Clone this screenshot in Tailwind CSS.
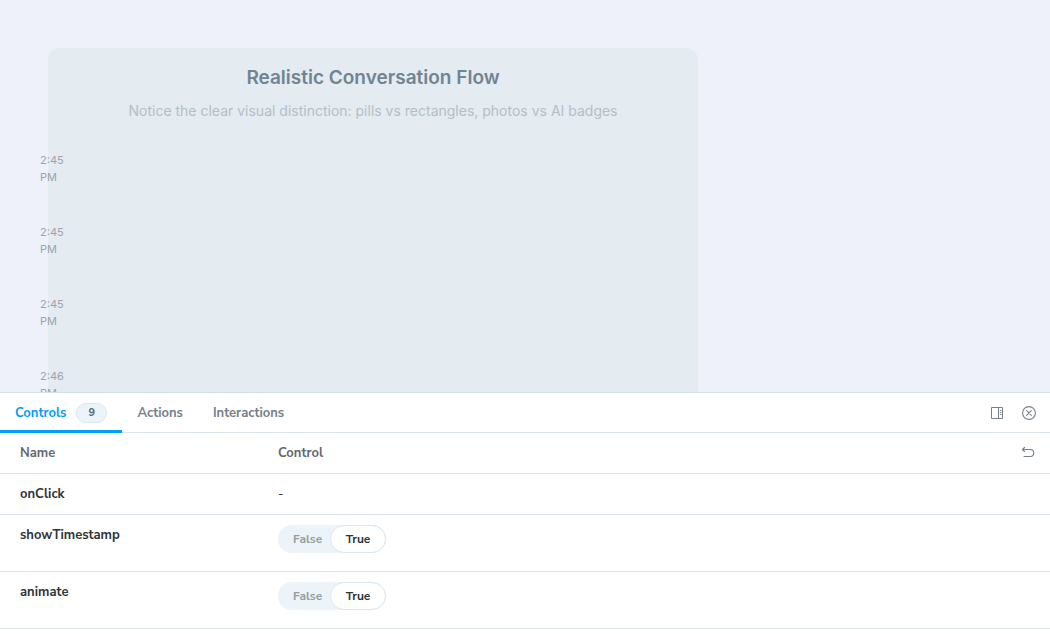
<!DOCTYPE html>
<html lang="en">
<head>
<meta charset="utf-8">
<meta name="viewport" content="width=device-width, initial-scale=1">
<title>Realistic Conversation Flow</title>
<script src="https://cdn.jsdelivr.net/npm/@tailwindcss/browser@4"></script>
</head>
<body class="flex h-screen flex-col overflow-hidden bg-white font-['Nunito_Sans','Open_Sans',sans-serif] text-[13px] leading-5 text-[#2e3438]">
  <main class="min-h-0 flex-1 overflow-hidden bg-[#eef1fa] p-12 font-['Inter',sans-serif]">
    <section class="w-full max-w-[650px] rounded-xl bg-[#e4ebf1] pt-4 pb-6">
      <h1 class="text-center text-[19px] leading-7 font-semibold text-[#718491]">Realistic Conversation Flow</h1>
      <p class="mt-[7px] text-center text-sm leading-6 text-[#b4bec7]">Notice the clear visual distinction: pills vs rectangles, photos vs AI badges</p>
      <ol class="-ml-2 mt-[29px] flex flex-col gap-[38px] text-[11px] leading-[17px] text-[#9ca3af]">
        <li class="w-8"><time>2:45 PM</time></li>
        <li class="w-8"><time>2:45 PM</time></li>
        <li class="w-8"><time>2:45 PM</time></li>
        <li class="w-8"><time>2:46 PM</time></li>
      </ol>
    </section>
  </main>

  <section class="h-[242px] shrink-0 overflow-hidden border-t border-[#d5dfe6] bg-white" aria-label="Addons">
    <div class="flex h-10 border-b border-[#d9e3e9] font-bold text-[#73828c]">
      <div role="tablist" class="flex">
        <button role="tab" aria-selected="true" class="-mb-px flex items-center gap-2.5 border-b-3 border-[#029cfd] px-[15px] pt-[3px] text-[#029cfd]">Controls
          <span class="flex h-5 w-[31px] items-center justify-center rounded-full border border-[#d9e8f2] bg-[#ecf4f9] text-[11px] text-[#5c6870]">9</span>
        </button>
        <button role="tab" aria-selected="false" class="px-[15px]">Actions</button>
        <button role="tab" aria-selected="false" class="px-[15px]">Interactions</button>
      </div>
      <div class="ml-auto flex items-center gap-[18px] pr-3.5">
        <button aria-label="Change addon orientation"><svg class="block size-3.5" viewBox="0 0 14 14" fill="none" stroke="#73828c"><path d="M1.5 1.5h11v11h-11zM8.5 1.5v11"/><path d="M9.8 4.5h1.7M9.8 6.5h1.7M9.8 8.5h1.7"/></svg></button>
        <button aria-label="Hide addons"><svg class="block size-3.5" viewBox="0 0 14 14" fill="none" stroke="#73828c" stroke-width="1.1" stroke-linecap="round"><circle cx="7" cy="7" r="6.4"/><path d="M4.7 4.7l4.6 4.6M9.3 4.7l-4.6 4.6"/></svg></button>
      </div>
    </div>
    <table class="w-full table-fixed border-separate border-spacing-0 text-left [&_td]:border-b [&_td]:border-[#d9e3e9] [&_th]:border-b [&_th]:border-[#d9e3e9]">
      <thead>
        <tr class="h-[41px] text-[#63696d]">
          <th scope="col" class="w-[258px] pl-5 font-bold">Name</th>
          <th scope="col" class="pl-5 font-bold">Control</th>
          <th scope="col" class="w-12 pr-[15px]"><button aria-label="Reset controls" class="ml-auto block"><svg class="block size-3.5" viewBox="0 0 14 14" fill="none" stroke="#73828c" stroke-width="1.1" stroke-linecap="round" stroke-linejoin="round"><path d="M3.5 1.5l-2 2 2 2M1.5 3.5h7.75a3.5 3.5 0 0 1 0 7H3"/></svg></button></th>
        </tr>
      </thead>
      <tbody>
        <tr class="h-[41px]">
          <th scope="row" class="pl-5 font-bold">onClick</th>
          <td class="pl-5" colspan="2">-</td>
        </tr>
        <tr class="h-[57px] align-top">
          <th scope="row" class="pt-2.5 pl-5 font-bold">showTimestamp</th>
          <td class="pt-2.5 pl-5" colspan="2">
            <label class="relative flex h-7 w-27 rounded-full bg-[#ecf4f9] text-xs leading-7 font-bold">
              <input type="checkbox" role="switch" checked aria-label="showTimestamp" class="absolute inset-0 size-full cursor-pointer appearance-none rounded-full">
              <span class="flex-1 pl-[15px] text-[#969da1]">False</span>
              <span class="w-14 rounded-full border border-[#d9e8f2] bg-white text-center leading-[26px]">True</span>
            </label>
          </td>
        </tr>
        <tr class="h-[57px] align-top">
          <th scope="row" class="pt-2.5 pl-5 font-bold">animate</th>
          <td class="pt-2.5 pl-5" colspan="2">
            <label class="relative flex h-7 w-27 rounded-full bg-[#ecf4f9] text-xs leading-7 font-bold">
              <input type="checkbox" role="switch" checked aria-label="animate" class="absolute inset-0 size-full cursor-pointer appearance-none rounded-full">
              <span class="flex-1 pl-[15px] text-[#969da1]">False</span>
              <span class="w-14 rounded-full border border-[#d9e8f2] bg-white text-center leading-[26px]">True</span>
            </label>
          </td>
        </tr>
      </tbody>
    </table>
  </section>
</body>
</html>
